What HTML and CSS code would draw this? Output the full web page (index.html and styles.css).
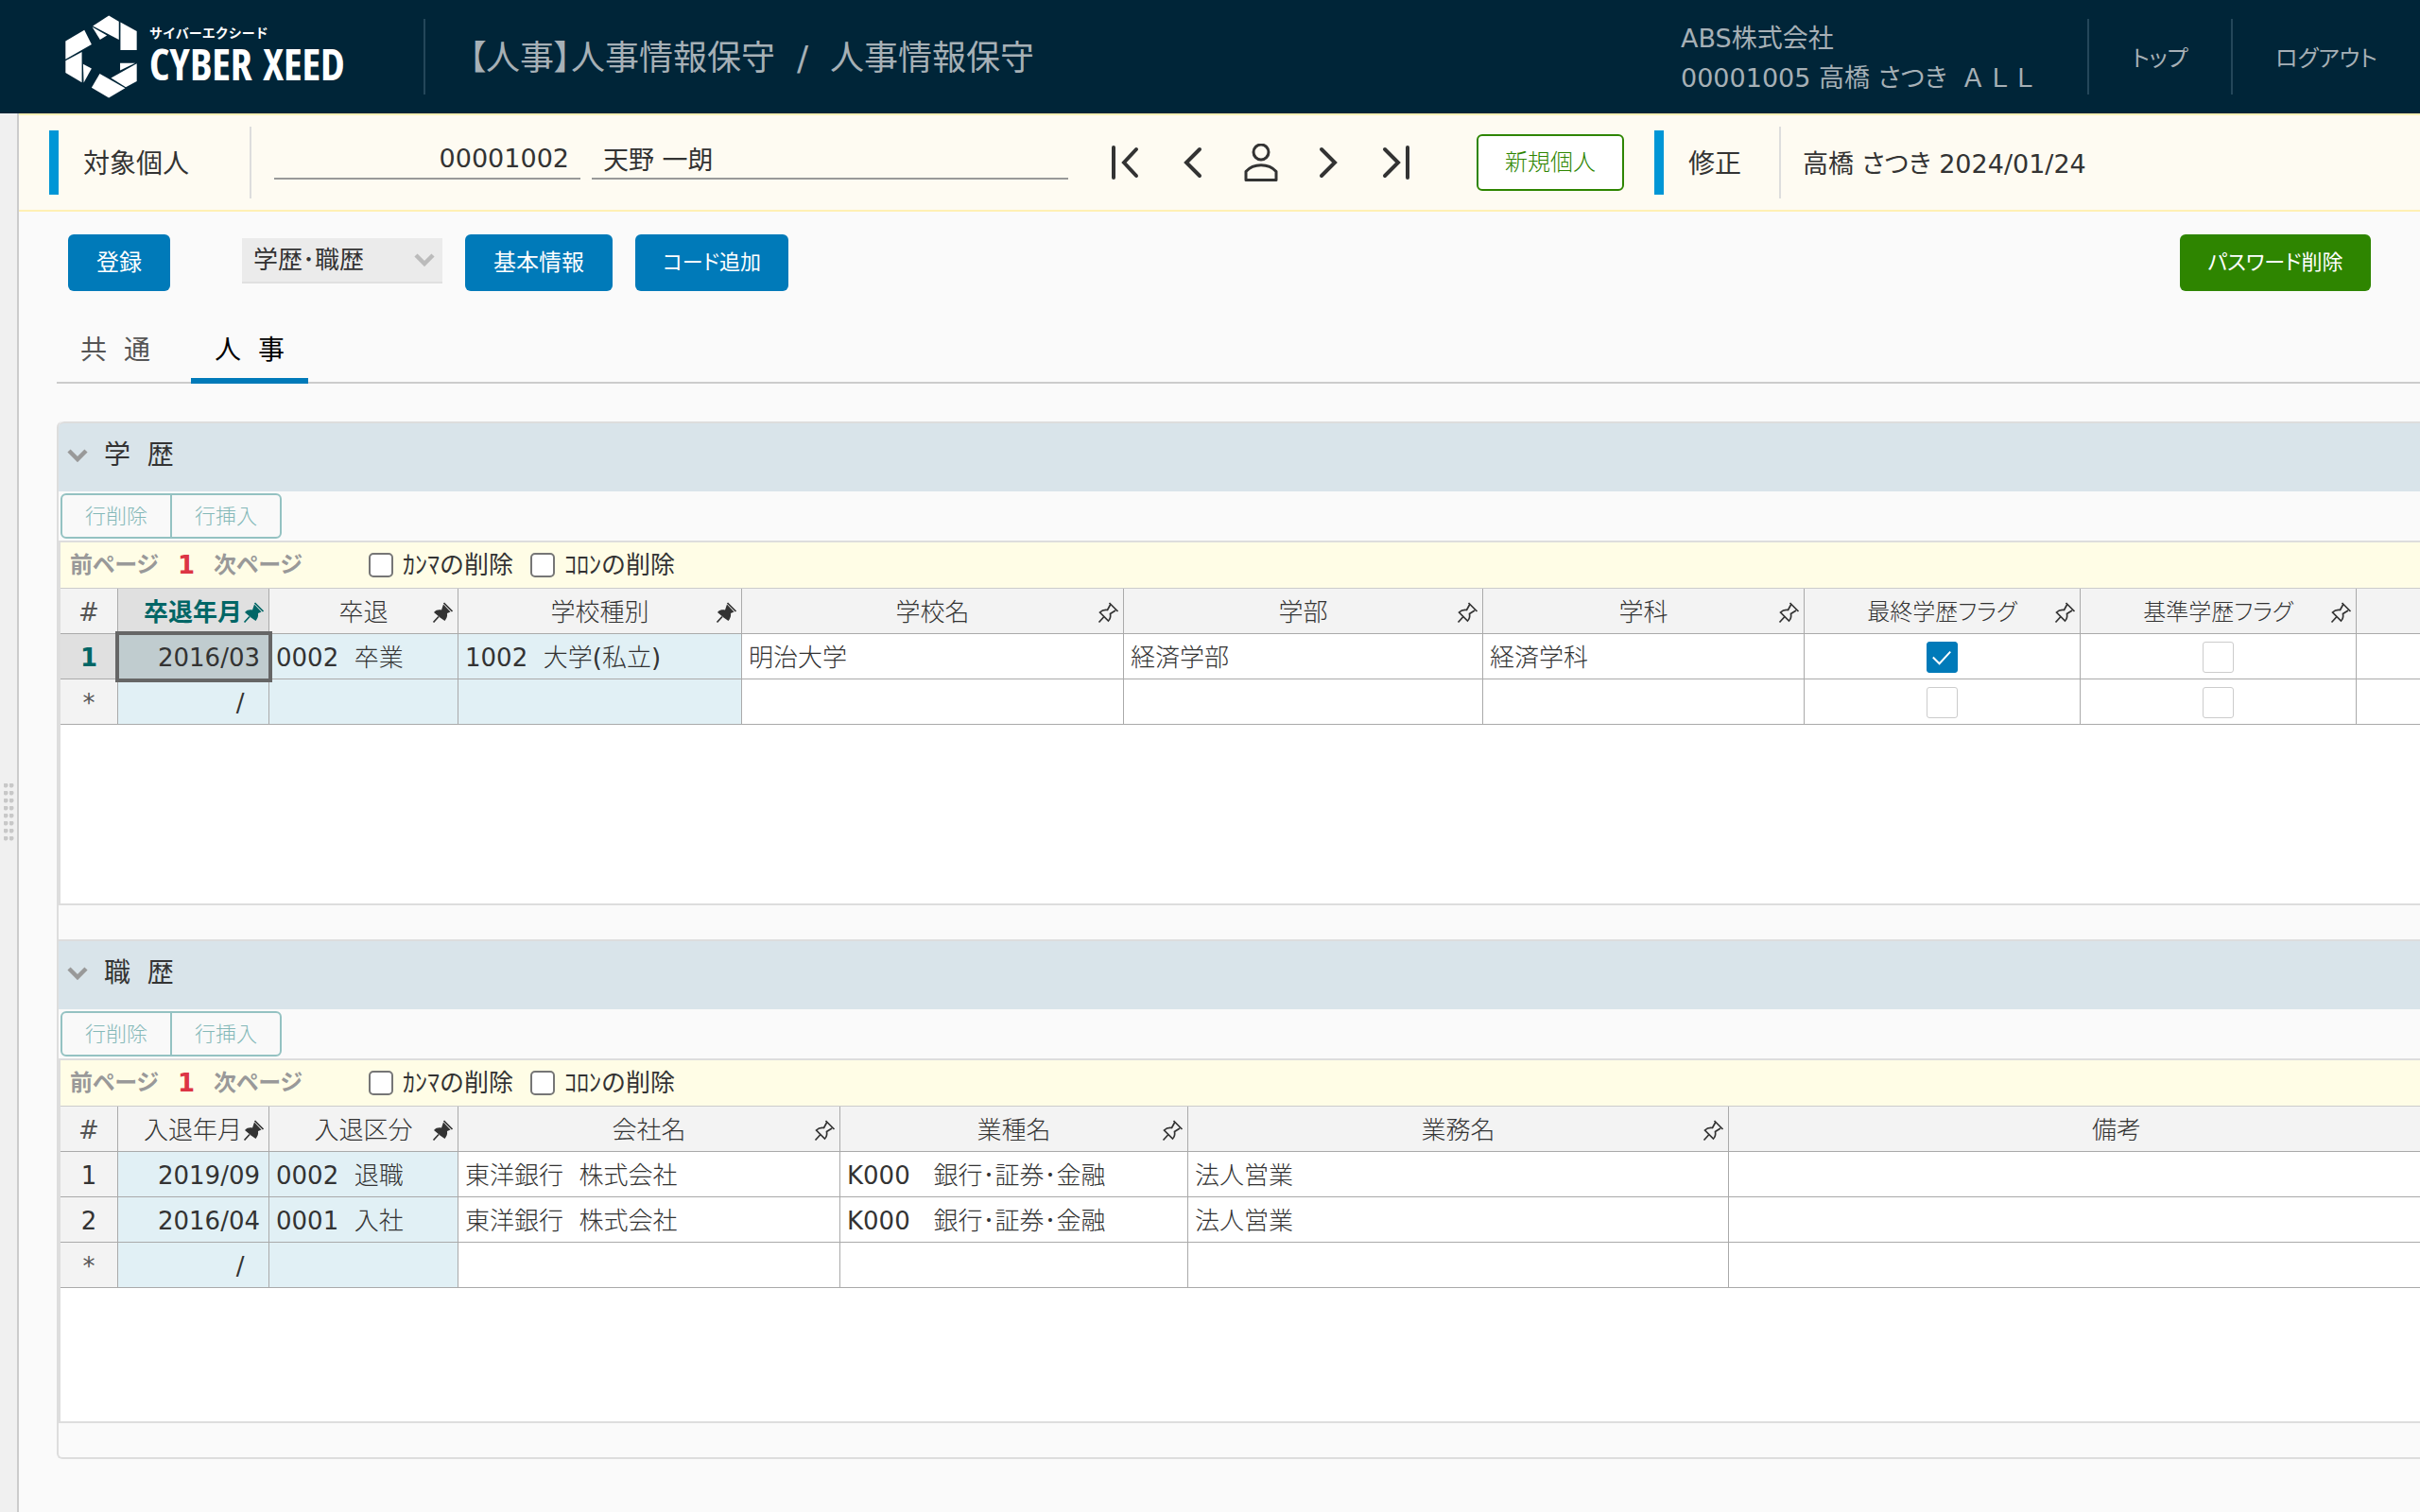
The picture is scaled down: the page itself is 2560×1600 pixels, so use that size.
FILE: index.html
```html
<!DOCTYPE html>
<html lang="ja">
<head>
<meta charset="utf-8">
<meta name="viewport" content="width=device-width, initial-scale=1">
<title>人事情報保守</title>
<link rel="stylesheet" href="styles.css">
</head>
<body>
<svg class="defs" aria-hidden="true">
  <symbol id="pin-on" viewBox="0 0 24 24">
    <path d="M13 3.500 L20.500 11.500 L17 13 C17.500 16 16.500 18.500 14.500 21 L9.500 17.500 L3 12 C5 9.500 8 9 11 9.500 Z" fill="currentColor"/>
    <path d="M2.500 22.500 L8 16.500 M13.500 2 L22.500 11" fill="none" stroke="currentColor" stroke-width="1.700"/>
  </symbol>
  <symbol id="pin-off" viewBox="0 0 24 24">
    <path d="M14.500 4 L11.500 9.500 C8 9 5.500 10 3.500 12 L12.500 21 C14.500 19 15 16.500 14.500 13.500 L20 10 M2.500 22.500 L8 16.500 M13.500 2 L22.500 11" fill="none" stroke="currentColor" stroke-width="1.700"/>
  </symbol>
  <symbol id="chevron" viewBox="0 0 22 14">
    <path d="M2 2 L11 11 L20 2" fill="none" stroke="currentColor" stroke-width="4.500"/>
  </symbol>
</svg>

<header class="header">
  <a class="logo" href="#">
    <svg class="logo-mark" viewBox="57 48 229 264" aria-hidden="true" fill="#fff">
      <path d="M145 82 196 49 228 68V126Z"/>
      <path d="M143 85 190 112 168 126Z"/>
      <path d="M233 70 285 99V159H233Z"/>
      <path d="M58 130 118 95 141 141 58 188Z"/>
      <path d="M58 193 110 165V262L58 231Z"/>
      <path d="M114 203 141 218 116 263Z"/>
      <path d="M232 200H280L232 224Z"/>
      <path d="M285 202V258L250 277 203 248Z"/>
      <path d="M167 234 248 280 196 311 141 279Z"/>
    </svg>
    <span class="logo-text">
      <span class="logo-kana">サイバーエクシード</span>
      <span class="logo-name">CYBER XEED</span>
    </span>
  </a>
  <h1 class="title">【人事】人事情報保守&nbsp; /&nbsp; 人事情報保守</h1>
  <div class="user">
    <div>ABS株式会社</div>
    <div>00001005 高橋 さつき&nbsp; Ａ Ｌ Ｌ</div>
  </div>
  <nav class="nav">
    <a class="nav-top" href="#">トップ</a>
    <a class="nav-logout" href="#">ログアウト</a>
  </nav>
</header>

<div class="body">
  <div class="splitter"><div class="grip"></div></div>
  <main class="main">
    <div class="person">
      <label class="marked target" for="person-code">対象個人</label>
      <input class="field code-field" id="person-code" value="00001002">
      <input class="field name-field" aria-label="氏名" value="天野 一朗">
      <div class="pager-icons">
        <button class="icon-button" type="button" aria-label="先頭"><svg viewBox="0 0 40 40"><path d="M7 4V36M31 6 18 20 31 34"/></svg></button>
        <button class="icon-button" type="button" aria-label="前へ"><svg viewBox="0 0 40 40"><path d="M26 6 12 20 26 34"/></svg></button>
        <button class="icon-button" type="button" aria-label="個人検索"><svg class="thin" viewBox="0 0 40 40"><circle cx="19" cy="9" r="8"/><path d="M3 38.500V29.500C11 20.500 27 20.500 35 29.500V38.500Z"/></svg></button>
        <button class="icon-button" type="button" aria-label="次へ"><svg viewBox="0 0 40 40"><path d="M11 6 25 20 11 34"/></svg></button>
        <button class="icon-button" type="button" aria-label="最後"><svg viewBox="0 0 40 40"><path d="M30 4V36M6 6 20 20 6 34"/></svg></button>
      </div>
      <button class="new-person" type="button">新規個人</button>
      <div class="marked mode">修正</div>
      <div class="updated">高橋 さつき 2024/01/24</div>
    </div>

    <div class="toolbar">
      <button class="button save" type="button">登録</button>
      <div class="select-wrap">
        <select class="select" aria-label="表示項目"><option>学歴･職歴</option></select>
        <svg class="select-arrow" aria-hidden="true"><use href="#chevron"/></svg>
      </div>
      <button class="button basic" type="button">基本情報</button>
      <button class="button add-code compact" type="button">コード追加</button>
      <button class="button reset compact" type="button">パスワード削除</button>
    </div>

    <div class="tabs" role="tablist">
      <button class="tab" type="button" role="tab" aria-selected="false">共&nbsp;&nbsp;通</button>
      <button class="tab active" type="button" role="tab" aria-selected="true">人&nbsp;&nbsp;事</button>
    </div>

    <section class="panel">
      <h2 class="panel-title"><svg class="chevron" aria-hidden="true"><use href="#chevron"/></svg>学&nbsp;&nbsp;歴</h2>
      <div class="row-actions">
        <button type="button" disabled>行削除</button><button type="button" disabled>行挿入</button>
      </div>
      <div class="grid">
        <div class="pager">
          <span class="page-link">前ページ</span><span class="page-now">1</span><span class="page-link">次ページ</span>
          <label class="option first"><input type="checkbox">ｶﾝﾏの削除</label>
          <label class="option"><input type="checkbox">ｺﾛﾝの削除</label>
        </div>
        <table>
          <colgroup><col class="w-no"><col class="w-date"><col class="w-kind"><col class="w-type"><col class="w-name"><col class="w-dept"><col class="w-course"><col class="w-flag"><col class="w-flag"><col></colgroup>
          <thead>
            <tr>
              <th class="mark">#</th>
              <th class="current"><div class="head"><span>卒退年月</span><svg><use href="#pin-on"/></svg></div></th>
              <th><div class="head"><span>卒退</span><svg><use href="#pin-on"/></svg></div></th>
              <th><div class="head"><span>学校種別</span><svg><use href="#pin-on"/></svg></div></th>
              <th><div class="head"><span>学校名</span><svg><use href="#pin-off"/></svg></div></th>
              <th><div class="head"><span>学部</span><svg><use href="#pin-off"/></svg></div></th>
              <th><div class="head"><span>学科</span><svg><use href="#pin-off"/></svg></div></th>
              <th><div class="head kana"><span>最終学歴フラグ</span><svg><use href="#pin-off"/></svg></div></th>
              <th><div class="head kana"><span>基準学歴フラグ</span><svg><use href="#pin-off"/></svg></div></th>
              <th></th>
            </tr>
          </thead>
          <tbody>
            <tr>
              <th class="current" scope="row">1</th>
              <td class="key date selected">2016/03</td>
              <td class="key"><span class="code">0002&nbsp;&nbsp;</span>卒業</td>
              <td class="key"><span class="code">1002&nbsp;&nbsp;</span>大学<span class="code">(</span>私立<span class="code">)</span></td>
              <td>明治大学</td>
              <td>経済学部</td>
              <td>経済学科</td>
              <td class="check"><input type="checkbox" aria-label="最終学歴フラグ 1行目" checked></td>
              <td class="check"><input type="checkbox" aria-label="基準学歴フラグ 1行目"></td>
              <td></td>
            </tr>
            <tr>
              <th class="mark" scope="row">*</th>
              <td class="key date">/&nbsp;&nbsp;</td>
              <td class="key"></td>
              <td class="key"></td>
              <td></td>
              <td></td>
              <td></td>
              <td class="check"><input type="checkbox" aria-label="最終学歴フラグ 新規行"></td>
              <td class="check"><input type="checkbox" aria-label="基準学歴フラグ 新規行"></td>
              <td></td>
            </tr>
          </tbody>
        </table>
      </div>
    </section>

    <section class="panel">
      <h2 class="panel-title"><svg class="chevron" aria-hidden="true"><use href="#chevron"/></svg>職&nbsp;&nbsp;歴</h2>
      <div class="row-actions">
        <button type="button" disabled>行削除</button><button type="button" disabled>行挿入</button>
      </div>
      <div class="grid">
        <div class="pager">
          <span class="page-link">前ページ</span><span class="page-now">1</span><span class="page-link">次ページ</span>
          <label class="option first"><input type="checkbox">ｶﾝﾏの削除</label>
          <label class="option"><input type="checkbox">ｺﾛﾝの削除</label>
        </div>
        <table>
          <colgroup><col class="w-no"><col class="w-date"><col class="w-kind"><col class="w-name"><col class="w-industry"><col class="w-job"><col class="w-note"></colgroup>
          <thead>
            <tr>
              <th class="mark">#</th>
              <th><div class="head"><span>入退年月</span><svg><use href="#pin-on"/></svg></div></th>
              <th><div class="head"><span>入退区分</span><svg><use href="#pin-on"/></svg></div></th>
              <th><div class="head"><span>会社名</span><svg><use href="#pin-off"/></svg></div></th>
              <th><div class="head"><span>業種名</span><svg><use href="#pin-off"/></svg></div></th>
              <th><div class="head"><span>業務名</span><svg><use href="#pin-off"/></svg></div></th>
              <th><div class="head"><span>備考</span></div></th>
            </tr>
          </thead>
          <tbody>
            <tr>
              <th scope="row">1</th>
              <td class="key date">2019/09</td>
              <td class="key"><span class="code">0002&nbsp;&nbsp;</span>退職</td>
              <td>東洋銀行&nbsp;&nbsp;株式会社</td>
              <td><span class="code">K000&nbsp;&nbsp;&nbsp;</span>銀行･証券･金融</td>
              <td>法人営業</td>
              <td></td>
            </tr>
            <tr>
              <th scope="row">2</th>
              <td class="key date">2016/04</td>
              <td class="key"><span class="code">0001&nbsp;&nbsp;</span>入社</td>
              <td>東洋銀行&nbsp;&nbsp;株式会社</td>
              <td><span class="code">K000&nbsp;&nbsp;&nbsp;</span>銀行･証券･金融</td>
              <td>法人営業</td>
              <td></td>
            </tr>
            <tr>
              <th class="mark" scope="row">*</th>
              <td class="key date">/&nbsp;&nbsp;</td>
              <td class="key"></td>
              <td></td>
              <td></td>
              <td></td>
              <td></td>
            </tr>
          </tbody>
        </table>
      </div>
    </section>
  </main>
</div>
</body>
</html>
```
FILE: styles.css
```css
* { box-sizing: border-box; }

html, body { height: 100%; }

body {
  margin: 0;
  display: flex;
  flex-direction: column;
  overflow: hidden;
  background: #fafafa;
  color: #333;
  font-family: "DejaVu Sans", "Noto Sans CJK JP", sans-serif;
  font-size: 26px;
  line-height: 36px;
}

button, input, select { font: inherit; color: inherit; margin: 0; }
button { cursor: pointer; padding: 0; }
h1, h2 { margin: 0; font-weight: 400; }
.defs { display: none; }

/* header */
.header {
  flex: none;
  display: flex;
  align-items: center;
  height: 120px;
  background: #002538;
  color: #a6b0b6;
}
.logo {
  flex: 0 0 448px;
  display: flex;
  align-items: center;
  gap: 13px;
  padding-left: 69px;
  color: #fff;
  text-decoration: none;
}
.logo-mark { width: 76px; height: 88px; }
.logo-text { display: flex; flex-direction: column; white-space: nowrap; }
.logo-kana { font-size: 14px; font-weight: 700; line-height: 14px; }
.logo-name { font: 700 46px/50px "Open Sans Condensed", "Open Sans", sans-serif; }
.title {
  flex: 1;
  height: 80px;
  padding-left: 46px;
  border-left: 2px solid #24475a;
  font-size: 36px;
  line-height: 84px;
  font-weight: 400;
  font-feature-settings: "palt";
  white-space: nowrap;
}
.user { flex: 0 0 430px; padding-top: 4px; font-size: 27px; line-height: 42px; font-feature-settings: "palt"; white-space: nowrap; }
.nav { display: flex; }
.nav a {
  height: 80px;
  border-left: 2px solid #24475a;
  color: inherit;
  font-size: 24px;
  line-height: 84px;
  text-align: center;
  text-decoration: none;
  font-feature-settings: "palt";
}
.nav-top { width: 152px; }
.nav-logout { width: 200px; }

/* frame */
.body { flex: 1; display: flex; min-height: 0; }
.splitter {
  flex: 0 0 20px;
  display: flex;
  align-items: center;
  padding-left: 4px;
  background: #f0f0f0;
  border-right: 2px solid #ccc;
}
.grip {
  width: 12px;
  height: 62px;
  background: radial-gradient(circle at 2px 2px, #c8c8c8 2px, transparent 3px) 0 0 / 6px 8px;
}
.main { flex: 1; min-width: 0; overflow: hidden; }

/* person bar */
.person {
  display: flex;
  align-items: center;
  height: 104px;
  padding-left: 32px;
  background: #fefbf2;
  border-top: 2px solid #fff0b4;
  border-bottom: 2px solid #fff0b4;
  white-space: nowrap;
}
.marked {
  display: flex;
  align-items: center;
  height: 76px;
  border-right: 2px solid #ddd;
  background: linear-gradient(#0096d6, #0096d6) 0 50% / 10px 68px no-repeat;
  padding: 4px 0 0 36px;
  font-size: 28px;
}
.target { width: 214px; margin-right: 24px; }
.mode { width: 134px; margin-left: 32px; margin-right: 23px; }
.field {
  height: 44px;
  margin-bottom: 8px;
  padding: 0 12px;
  border: 0;
  border-bottom: 2px solid #999;
  border-radius: 0;
  background: transparent;
  font-size: 27px;
}
.code-field { width: 324px; margin-right: 12px; text-align: right; }
.name-field { width: 504px; }
.pager-icons { display: flex; margin-left: 25px; }
.icon-button {
  display: grid;
  place-items: center;
  width: 72px;
  height: 60px;
  border: 0;
  background: none;
}
.icon-button svg { width: 40px; height: 40px; fill: none; stroke: #333; stroke-width: 4; stroke-linecap: round; }
.icon-button .thin { stroke-width: 3; stroke-linejoin: round; }
.new-person {
  width: 156px;
  height: 60px;
  margin-left: 47px;
  border: 2px solid #2e8500;
  border-radius: 6px;
  background: #fff;
  color: #2e8500;
  font-size: 24px;
  font-weight: 300;
}
.updated { padding-top: 4px; font-size: 27px; font-feature-settings: "palt"; }

/* toolbar */
.toolbar { display: flex; align-items: center; padding: 24px 52px 0; }
.button {
  height: 60px;
  border: 0;
  border-radius: 6px;
  background: #007ab9;
  color: #fff;
  font-size: 24px;
}
.compact { font-size: 22px; font-feature-settings: "palt"; }
.save { width: 108px; margin-right: 76px; }
.basic { width: 156px; margin: 0 24px; }
.add-code { width: 162px; }
.reset { width: 202px; margin-left: auto; background: #2e8500; }
.select-wrap { position: relative; margin-bottom: 4px; }
.select {
  appearance: none;
  display: block;
  width: 212px;
  height: 48px;
  padding: 0 12px;
  border: 0;
  border-bottom: 2px solid #e0e0e0;
  border-radius: 0;
  background: #ebebeb;
}
.select-arrow {
  position: absolute;
  right: 8px;
  top: 16px;
  width: 22px;
  height: 14px;
  color: #bbb;
  pointer-events: none;
}

/* tabs */
.tabs {
  display: flex;
  gap: 18px;
  margin: 22px 0 40px 40px;
  background: linear-gradient(#ccc, #ccc) 0 100% / 100% 2px no-repeat;
}
.tab {
  width: 124px;
  height: 76px;
  padding-top: 12px;
  border: 0;
  border-bottom: 6px solid transparent;
  background: none;
  color: #555;
  font-size: 28px;
}
.tab.active { color: #000; border-bottom-color: #007ab9; }

/* panels */
.panel { margin-left: 40px; padding-bottom: 36px; border-left: 2px solid #ddd; }
.panel:last-child { border-bottom: 2px solid #ddd; border-bottom-left-radius: 6px; }
.tabs + .panel, .tabs + .panel .panel-title { border-top-left-radius: 6px; }
.panel-title {
  display: flex;
  align-items: center;
  height: 74px;
  padding: 0 0 4px 9px;
  border-top: 2px solid #ddd;
  background: #d9e4ea;
  font-size: 28px;
}
.chevron { width: 22px; height: 14px; margin-right: 17px; color: #999; }
.row-actions { display: flex; padding: 2px; }
.row-actions button {
  width: 118px;
  height: 48px;
  padding-top: 2px;
  border: 2px solid #94c2c2;
  background: #f9f9f9;
  color: #84b8b8;
  font-size: 22px;
  font-weight: 300;
  cursor: default;
}
.row-actions button:first-child { border-radius: 6px 0 0 6px; }
.row-actions button:last-child { margin-left: -2px; border-radius: 0 6px 6px 0; }
.grid {
  min-height: 386px;
  border: solid #ddd;
  border-width: 2px 0 2px 2px;
  background: #fff;
  overflow: hidden;
}

/* pager */
.pager {
  display: flex;
  align-items: center;
  height: 49px;
  padding-left: 10px;
  border-bottom: 1px solid #ccc;
  background: #fffde6;
  white-space: nowrap;
}
.page-link { width: 94px; color: #999; font-size: 24px; font-weight: 700; font-feature-settings: "palt"; }
.page-now { width: 58px; color: #dc3545; font-weight: 700; text-align: center; }
.option { display: flex; align-items: center; gap: 10px; margin-right: 18px; }
.option.first { margin-left: 70px; }
.option input {
  appearance: none;
  width: 26px;
  height: 26px;
  border: 2px solid #767676;
  border-radius: 5px;
  background: #fff;
}

/* tables */
table { width: 100%; table-layout: fixed; border-collapse: separate; border-spacing: 0; }
.w-no { width: 61px; }
.w-date { width: 160px; }
.w-kind { width: 200px; }
.w-type { width: 300px; }
.w-name { width: 404px; }
.w-dept { width: 380px; }
.w-course { width: 340px; }
.w-flag { width: 292px; }
.w-industry { width: 368px; }
.w-job { width: 572px; }
.w-note { width: 820px; }
th, td {
  height: 48px;
  padding: 2px 7px 0;
  border-right: 1px solid #aaa;
  border-bottom: 1px solid #aaa;
  font-weight: 300;
  line-height: 36px;
  text-align: left;
  white-space: nowrap;
}
th { padding: 2px 0 0; background: #f3f3f3; font-weight: 400; text-align: center; }
th:last-child, td:last-child { border-right: 0; }
.mark { color: #555; }
th.current { background: #e0e0e0; color: #006666; font-weight: 700; }
.head { display: grid; grid-template-columns: 1fr auto 1fr; align-items: center; padding: 0 4px; font-weight: 300; }
.current .head { font-weight: 700; }
.head span { grid-column: 2; }
.head svg { width: 24px; height: 24px; justify-self: end; }
.kana { font-size: 24px; font-feature-settings: "palt"; }
.key { background: #e1f0f5; }
.code, .date { font-weight: 400; }
.date { padding-right: 9px; text-align: right; }
.selected {
  position: relative;
  background: #c0cccf;
  outline: 4px solid #666;
  outline-offset: -1px;
}
.check { text-align: center; }
.check input {
  appearance: none;
  display: block;
  width: 33px;
  height: 33px;
  margin: 0 auto;
  border: 1px solid #ccc;
  border-radius: 3px;
  background: #fff;
}
.check input:checked {
  border-color: #007ab9;
  background: #007ab9 url("data:image/svg+xml,%3Csvg xmlns='http://www.w3.org/2000/svg' viewBox='0 0 32 32'%3E%3Cpath d='M6 16l7 7 12-13' fill='none' stroke='white' stroke-width='2'/%3E%3C/svg%3E") center / contain no-repeat;
}
```
